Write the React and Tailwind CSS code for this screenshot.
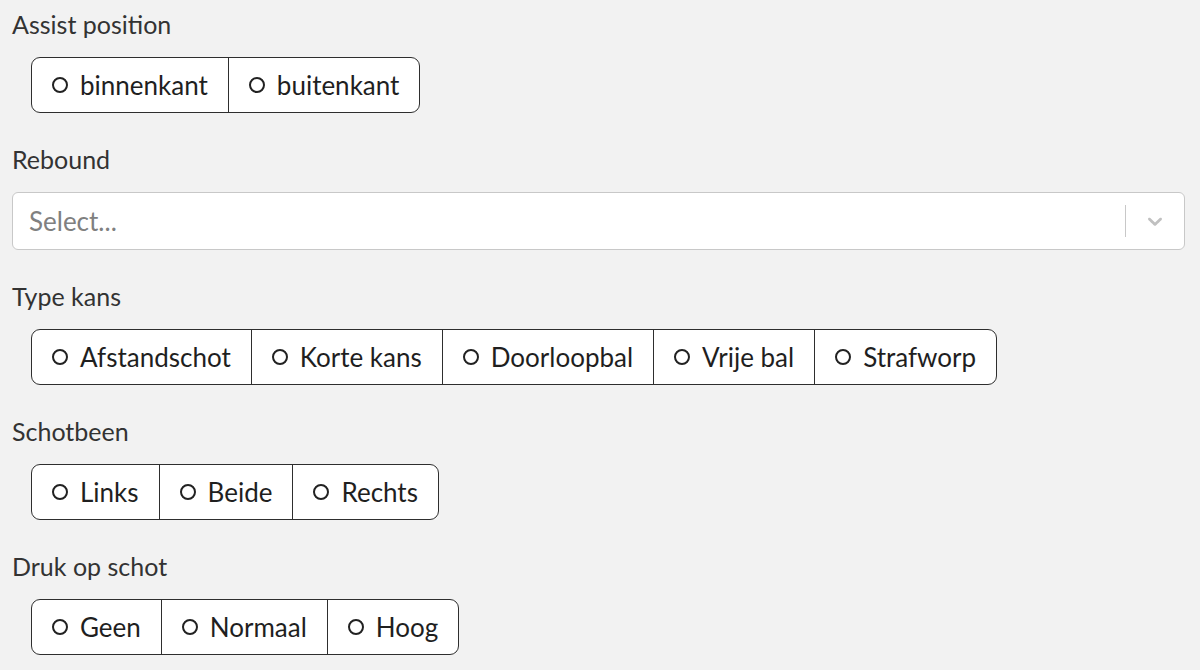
import { useState } from 'react'

const font = { fontFamily: 'Lato, "Noto Sans", sans-serif' }

function RadioGroup({ options }) {
  const [value, setValue] = useState(null)
  return (
    <div className="ml-[19px] inline-flex h-[56px] rounded-[9px] border-[1.5px] border-[#2e2e2e] bg-white overflow-hidden">
      {options.map((opt, i) => (
        <button
          key={opt}
          onClick={() => setValue(opt)}
          className={`flex items-center gap-[12px] px-[20px] text-[26px] text-[#1f1f1f] ${
            i > 0 ? 'border-l-[1.5px] border-[#2e2e2e]' : ''
          }`}
        >
          <span
            className={`shrink-0 w-[16px] h-[16px] rounded-full border-2 border-[#222] ${
              value === opt ? 'bg-[#222]' : ''
            }`}
          />
          <span>{opt}</span>
        </button>
      ))}
    </div>
  )
}

function Label({ children }) {
  return <div className="h-[36px] leading-[36px] text-[25px] text-[#333] mb-[15px]">{children}</div>
}

export default function App() {
  return (
    <div className="min-h-[670px] bg-[#f2f2f2] px-[12px] pt-[6px]" style={font}>
      {/* Assist position */}
      <div className="mb-[28px]">
        <Label>Assist position</Label>
        <RadioGroup options={['binnenkant', 'buitenkant']} />
      </div>

      {/* Rebound */}
      <div className="mb-[28px] mr-[3px]">
        <Label>Rebound</Label>
        <div className="flex items-center h-[58px] rounded-[6px] border border-[#c8c8c8] bg-white">
          <div className="flex-1 pl-[16px] text-[26px] text-[#808080]">Select...</div>
          <div className="w-px h-[32px] bg-[#c8c8c8]" />
          <div className="w-[58px] flex justify-center">
            <svg width="24" height="24" viewBox="0 0 20 20" fill="#c0c0c0">
              <path d="M4.516 7.548c0.436-0.446 1.043-0.481 1.576 0l3.908 3.747 3.908-3.747c0.533-0.481 1.141-0.446 1.574 0 0.436 0.445 0.408 1.197 0 1.615-0.406 0.418-4.695 4.502-4.695 4.502-0.217 0.223-0.502 0.335-0.787 0.335s-0.57-0.112-0.789-0.335c0 0-4.287-4.084-4.695-4.502s-0.436-1.17 0-1.615z" />
            </svg>
          </div>
        </div>
      </div>

      {/* Type kans */}
      <div className="mb-[28px]">
        <Label>Type kans</Label>
        <RadioGroup options={['Afstandschot', 'Korte kans', 'Doorloopbal', 'Vrije bal', 'Strafworp']} />
      </div>

      {/* Schotbeen */}
      <div className="mb-[28px]">
        <Label>Schotbeen</Label>
        <RadioGroup options={['Links', 'Beide', 'Rechts']} />
      </div>

      {/* Druk op schot */}
      <div>
        <Label>Druk op schot</Label>
        <RadioGroup options={['Geen', 'Normaal', 'Hoog']} />
      </div>
    </div>
  )
}
